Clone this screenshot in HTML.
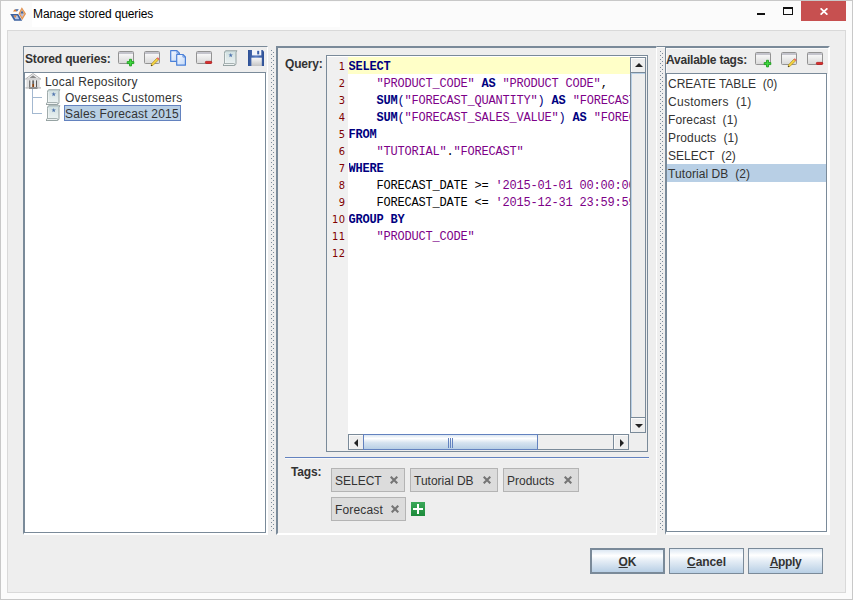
<!DOCTYPE html>
<html><head><meta charset="utf-8"><title>Manage stored queries</title>
<style>
html,body{margin:0;padding:0;}
body{width:853px;height:600px;overflow:hidden;background:#fbfbfb;font-family:"Liberation Sans",sans-serif;font-size:13px;color:#333;position:relative;}
.abs{position:absolute;}
#win{left:0;top:0;width:851px;height:598px;border:1px solid #c8c8c8;background:#fbfbfb;}
#titlebg{left:32px;top:2px;width:308px;height:25px;background:#fff;}
#title{left:33px;top:7px;letter-spacing:-0.12px;font-size:12px;color:#000;white-space:nowrap;}
#close{left:801px;top:1px;width:45px;height:20px;background:#c75050;}
#content{left:7px;top:30px;width:837px;height:561px;border:1px solid #d9d9d9;background:#eeeeee;}
.lbl{letter-spacing:-0.17px;font-weight:bold;font-size:12px;color:#333;white-space:nowrap;}
#lp{left:23px;top:46px;width:245px;height:489px;border-left:1px solid #7a8a99;border-top:1px solid #7a8a99;border-bottom:2px solid #fff;border-right:1px solid #fff;box-sizing:border-box;}
#tree{left:24px;top:72px;width:242px;height:461px;border:1px solid #7a8a99;background:#fff;box-sizing:border-box;box-shadow:1px 1px 0 #fff;}
#mp{left:276px;top:46px;width:381px;height:489px;border-left:2px solid #7a8a99;border-top:2px solid #7a8a99;border-right:1px solid #fff;border-bottom:2px solid #fff;box-sizing:border-box;}
#rp{left:665px;top:46px;width:165px;height:489px;border-left:1px solid #7a8a99;border-top:2px solid #7a8a99;border-right:2px solid #fff;border-bottom:2px solid #fff;box-sizing:border-box;box-shadow:inset 1px 1px 0 #fafafa;}
#list{left:666px;top:73px;width:161px;height:459px;border:1px solid #7a8a99;background:#fff;box-sizing:border-box;box-shadow:1px 1px 0 #fff;}
.li{left:667px;width:159px;height:18px;line-height:20px;overflow:hidden;font-size:12px;color:#333;white-space:pre;padding-left:1px;box-sizing:border-box;}
.tn{font-size:12px;letter-spacing:0.2px;color:#333;white-space:nowrap;line-height:16px;height:16px;}
#ed{left:326px;top:55px;width:322px;height:397px;border:1px solid #7a8a99;box-sizing:border-box;background:#fff;}
#gut{left:327px;top:56px;width:21px;height:395px;background:#f0f0f0;}
#hl{left:348px;top:57px;width:282px;height:17px;background:#ffffc8;}
.ln{left:325px;width:20.5px;letter-spacing:0.5px;text-align:right;font-family:"DejaVu Sans Condensed","DejaVu Sans",sans-serif;font-stretch:condensed;font-size:11px;color:#800000;height:17px;line-height:17px;}
.cl{left:348.5px;width:281.500px;overflow:hidden;white-space:pre;font-family:"Liberation Mono",monospace;font-size:12px;letter-spacing:-0.2px;height:17px;line-height:17px;color:#000;}
.k{color:#000080;font-weight:bold;}
.s{color:#7d0088;}
.p{color:#000080;}
.btn{top:548px;width:75px;height:26px;box-sizing:border-box;border:1px solid #7a8a99;background:linear-gradient(#dde8f3 0%,#ffffff 26%,#e6eef6 48%,#b8cfe5 100%);font-weight:bold;font-size:12px;text-align:center;line-height:26px;color:#333;letter-spacing:-0.1px;}
.btn u{text-decoration:underline;text-decoration-thickness:1px;text-underline-offset:1px;}
.chip{height:24px;box-sizing:border-box;border:1px solid #b4b4b4;background:#dcdcdc;font-size:12px;color:#333;line-height:24px;white-space:nowrap;overflow:hidden;}
.div{width:4px;background-image:radial-gradient(circle at 0.5px 0.5px,#9aa 0.6px,transparent 0.8px);}
</style></head><body>

<svg width="0" height="0" style="position:absolute">
<defs>
<linearGradient id="gbox" x1="0" y1="0" x2="0" y2="1"><stop offset="0" stop-color="#ffffff"/><stop offset="1" stop-color="#d8d8d8"/></linearGradient>
<linearGradient id="gscr" x1="0" y1="0" x2="0" y2="1"><stop offset="0" stop-color="#cfdfe0"/><stop offset="1" stop-color="#eff4f4"/></linearGradient>
<linearGradient id="gflop" x1="0" y1="0" x2="1" y2="0"><stop offset="0" stop-color="#2d4f94"/><stop offset="0.5" stop-color="#5b7fc4"/><stop offset="1" stop-color="#2d4f94"/></linearGradient>
<linearGradient id="gshut" x1="0" y1="0" x2="0" y2="1"><stop offset="0" stop-color="#fafafa"/><stop offset="1" stop-color="#c4c4c4"/></linearGradient>
<linearGradient id="gcopy" x1="0" y1="0" x2="1" y2="1"><stop offset="0" stop-color="#f4f8fe"/><stop offset="1" stop-color="#c4d9f7"/></linearGradient>
<g id="ibox">
<rect x="0.5" y="0.5" width="15" height="12" rx="1" fill="url(#gbox)" stroke="#939393"/>
<rect x="1" y="1" width="14" height="2" fill="#c4c4cc"/>
</g>
<g id="iadd"><use href="#ibox"/>
<path d="M11.500 8.300h2v2.300h2.300v2h-2.300v2.300h-2v-2.300h-2.300v-2h2.300z" fill="#3fd83f" stroke="#1fa01f" stroke-width="0.9" stroke-linejoin="round"/>
</g>
<g id="iedit"><use href="#ibox"/>
<path d="M12.800 7.200l1.700 1.700l-5.400 5.400l-2 0.600l0.400-2.100z" fill="#f5d442" stroke="#a08018" stroke-width="0.6"/>
<path d="M12.800 7.200l0.900-0.900l1.800 1.800l-0.900 0.900z" fill="#f05a5a"/>
<path d="M7 15l0.300-1.300l1 0.900z" fill="#111"/>
</g>
<g id="idel"><use href="#ibox"/>
<rect x="9.400" y="10.400" width="6.300" height="2" rx="0.700" fill="#e03030" stroke="#b01818" stroke-width="0.8"/>
</g>
<g id="iscr">
<path d="M2.500 0.800h11.600c-1 0.700-1.100 1.500-1.100 2.500v10c0 1.200-0.600 1.900-1.600 2.200h-11.400c1.200-0.400 1.500-1.100 1.500-2.200v-10c0-1 0.300-1.900 1-2.500z" fill="url(#gscr)" stroke="#8a9898" stroke-width="0.900"/>
<path d="M2.300 3v10" stroke="#fff" stroke-width="0.700" opacity="0.800"/>
<rect x="0.500" y="13.600" width="11.300" height="1.900" rx="0.950" fill="#f6f9f9" stroke="#8a9898" stroke-width="0.800"/>
<path d="M7.70 2.90L8.26 4.53L9.98 4.56L8.60 5.59L9.11 7.24L7.70 6.25L6.29 7.24L6.80 5.59L5.42 4.56L7.14 4.53z" fill="#4f74ad"/>
</g>
<g id="icopy">
<path d="M0.700 0.700h6.200l2.500 2.500v8.200h-8.700z" fill="url(#gcopy)" stroke="#4a80d8" stroke-width="1.200" stroke-linejoin="round"/>
<path d="M6.700 4.500h6.200l2.500 2.500v8.200h-8.700z" fill="url(#gcopy)" stroke="#4a80d8" stroke-width="1.200" stroke-linejoin="round"/>
<path d="M12.900 4.700v2.400h2.400" fill="none" stroke="#4a80d8" stroke-width="0.700"/>
<path d="M6.900 0.900v2.400h2.400" fill="none" stroke="#4a80d8" stroke-width="0.700"/>
</g>
<g id="isave">
<path d="M0 0h14.500l1.500 1.500v14.500h-16z" fill="url(#gflop)"/>
<rect x="4" y="0" width="9.300" height="5.400" fill="#f4f6fa"/>
<rect x="9.200" y="0.800" width="2" height="3.600" fill="#3a5fa8"/>
<rect x="3.400" y="7.700" width="10.400" height="8.300" fill="url(#gshut)"/>
</g>
</defs></svg>
<div id="win" class="abs"></div>
<div id="titlebg" class="abs"></div>
<div id="title" class="abs">Manage stored queries</div>
<div id="close" class="abs"></div>

<svg class="abs" style="left:9px;top:6px" width="18" height="16">
<path d="M1.200 8H9.200L13.200 14.800H5.200z" fill="#3c62a0"/>
<path d="M4.300 9.600H8.300L10.300 13.200H6.300z" fill="#b8c8e8"/>
<path d="M4.600 9.600H7.600L6.100 12z" fill="#e08030"/>
<path d="M12.800 1.200L17 7.800L13.200 14L9.600 7.600z" fill="#e09050"/>
<path d="M12.900 3.200L15.600 7.700L13.200 11.800L11 7.600z" fill="#f0c090"/>
<path d="M13 4.600L14.800 7.600H11.400z" fill="#3c62a0"/>
<path d="M11.500 8H14.700L13.200 10.800z" fill="#a8b8e8"/>
<path d="M4 5.600L6 3L8 5.600z" fill="#e08030"/>
<path d="M6 3.200H9.800L8 5.600z" fill="#3c62a0"/>
</svg>
<div class="abs" style="left:757px;top:13px;width:8px;height:2px;background:#111;"></div>
<div class="abs" style="left:783px;top:7px;width:10px;height:8px;box-sizing:border-box;border:1px solid #111;border-top-width:2px;"></div>
<svg class="abs" style="left:820px;top:8px" width="8" height="7"><path d="M0.600 0.300L7.400 6.700M7.400 0.300L0.600 6.700" stroke="#fff" stroke-width="1.700"/></svg>
<div id="content" class="abs"></div>

<div id="lp" class="abs"></div>
<div class="abs lbl" style="left:25px;top:52px;">Stored queries:</div>
<div id="tree" class="abs"></div>

<svg class="abs" style="left:25px;top:73px" width="17" height="16">
<path d="M0.500 6L8 0.500L15.800 6z" fill="#f2f2f2" stroke="#b4b4b4" stroke-width="1"/>
<path d="M4.300 5L8 2.200L11.600 5z" fill="#8a8a8a"/>
<rect x="1.500" y="6" width="13.500" height="1" fill="#d4d4d4"/>
<rect x="1.500" y="7" width="2.300" height="7" fill="#dcdcdc"/>
<rect x="12.400" y="7" width="2.300" height="7" fill="#dcdcdc"/>
<rect x="4.200" y="7.300" width="1.300" height="6.700" fill="#5a5a5a"/>
<rect x="10.800" y="7.300" width="1.300" height="6.700" fill="#5a5a5a"/>
<rect x="5.700" y="7" width="1.300" height="7" fill="#ececec"/>
<rect x="9.300" y="7" width="1.300" height="7" fill="#ececec"/>
<rect x="7.200" y="7.300" width="1.900" height="3.700" fill="#6a6a6a"/>
<rect x="7.200" y="11" width="1.900" height="3" fill="#8a4513"/>
<rect x="0.500" y="14" width="15.500" height="1.700" fill="#c8c8c8"/>
<rect x="4" y="14.300" width="8.500" height="1.500" fill="#7a7a7a"/>
</svg>
<div class="abs" style="left:32px;top:89px;width:1px;height:25px;background:#a3b8d0;"></div>
<div class="abs" style="left:32px;top:97px;width:10px;height:1px;background:#a3b8d0;"></div>
<div class="abs" style="left:32px;top:113px;width:10px;height:1px;background:#a3b8d0;"></div>
<div class="abs tn" style="left:45px;top:74px;">Local Repository</div>
<div class="abs tn" style="left:65px;top:90px;letter-spacing:0.27px;">Overseas Customers</div>
<div class="abs" style="left:64px;top:105px;width:117px;height:16px;background:#b8cfe5;border:1px solid #6382bf;box-sizing:border-box;"></div>
<div class="abs tn" style="left:65px;top:106px;">Sales Forecast 2015</div>


<svg class="abs" style="left:118px;top:51px" width="18" height="17"><use href="#iadd"/></svg>
<svg class="abs" style="left:144px;top:51px" width="18" height="17"><use href="#iedit"/></svg>
<svg class="abs" style="left:170px;top:50px" width="17" height="17"><use href="#icopy"/></svg>
<svg class="abs" style="left:196px;top:51px" width="18" height="17"><use href="#idel"/></svg>
<svg class="abs" style="left:223px;top:50px" width="16" height="17"><use href="#iscr"/></svg>
<svg class="abs" style="left:248px;top:50px" width="16" height="16"><use href="#isave"/></svg>

<svg class="abs" style="left:755px;top:52px" width="18" height="17"><use href="#iadd"/></svg>
<svg class="abs" style="left:781px;top:52px" width="18" height="17"><use href="#iedit"/></svg>
<svg class="abs" style="left:807px;top:52px" width="18" height="17"><use href="#idel"/></svg>

<svg class="abs" style="left:46px;top:89px" width="16" height="17"><use href="#iscr"/></svg>
<svg class="abs" style="left:46px;top:105px" width="16" height="17"><use href="#iscr"/></svg>
<div id="mp" class="abs"></div>
<div class="abs lbl" style="left:285px;top:57px;">Query:</div>
<div id="ed" class="abs"></div>
<div id="gut" class="abs"></div>
<div id="hl" class="abs"></div>
<div id="lines">
<div class="abs ln" style="top:58px;">1</div><div class="abs cl" style="top:59px;"><span class="k">SELECT</span></div>
<div class="abs ln" style="top:75px;">2</div><div class="abs cl" style="top:76px;">    <span class="s">"PRODUCT_CODE"</span> <span class="k">AS</span> <span class="s">"PRODUCT CODE"</span>,</div>
<div class="abs ln" style="top:92px;">3</div><div class="abs cl" style="top:93px;">    <span class="k">SUM</span><span class="p">(</span><span class="s">"FORECAST_QUANTITY"</span><span class="p">)</span> <span class="k">AS</span> <span class="s">"FORECAST QUANTITY"</span>,</div>
<div class="abs ln" style="top:109px;">4</div><div class="abs cl" style="top:110px;">    <span class="k">SUM</span><span class="p">(</span><span class="s">"FORECAST_SALES_VALUE"</span><span class="p">)</span> <span class="k">AS</span> <span class="s">"FORECAST SALES VALUE"</span></div>
<div class="abs ln" style="top:126px;">5</div><div class="abs cl" style="top:127px;"><span class="k">FROM</span></div>
<div class="abs ln" style="top:143px;">6</div><div class="abs cl" style="top:144px;">    <span class="s">"TUTORIAL"</span>.<span class="s">"FORECAST"</span></div>
<div class="abs ln" style="top:160px;">7</div><div class="abs cl" style="top:161px;"><span class="k">WHERE</span></div>
<div class="abs ln" style="top:177px;">8</div><div class="abs cl" style="top:178px;">    FORECAST_DATE &gt;= <span class="s">'2015-01-01 00:00:00'</span> <span class="k">AND</span></div>
<div class="abs ln" style="top:194px;">9</div><div class="abs cl" style="top:195px;">    FORECAST_DATE &lt;= <span class="s">'2015-12-31 23:59:59'</span></div>
<div class="abs ln" style="top:211px;">10</div><div class="abs cl" style="top:212px;"><span class="k">GROUP BY</span></div>
<div class="abs ln" style="top:228px;">11</div><div class="abs cl" style="top:229px;">    <span class="s">"PRODUCT_CODE"</span></div>
<div class="abs ln" style="top:245px;">12</div><div class="abs cl" style="top:246px;"></div>
</div>

<div class="abs lbl" style="left:291px;top:465px;">Tags:</div>


<!-- vertical scrollbar -->
<div class="abs" style="left:327px;top:56px;width:320px;height:1px;background:#fff;"></div>
<div class="abs" style="left:630px;top:57px;width:17px;height:394px;background:#eeeeee;"></div>
<div class="abs" style="left:630px;top:57px;width:16px;height:376px;box-sizing:border-box;border:1px solid #7a8a99;"></div>
<div class="abs" style="left:631px;top:73px;width:1px;height:344px;background:#b8cfe5;"></div>
<div class="abs" style="left:631px;top:73px;width:14px;height:1px;background:#b8cfe5;"></div>
<div class="abs" style="left:630px;top:57px;width:16px;height:16px;box-sizing:border-box;border:1px solid #7a8a99;background:#eeeeee;box-shadow:inset 1px 1px 0 #fafafa;"></div>
<div class="abs" style="left:630px;top:417px;width:16px;height:16px;box-sizing:border-box;border:1px solid #7a8a99;background:#eeeeee;box-shadow:inset 1px 1px 0 #fafafa;"></div>
<svg class="abs" style="left:635px;top:63px" width="8" height="4"><path d="M0 4L4 0L8 4z" fill="#222"/></svg>
<svg class="abs" style="left:635px;top:424px" width="8" height="4"><path d="M0 0L4 4L8 0z" fill="#222"/></svg>
<!-- horizontal scrollbar -->
<div class="abs" style="left:348px;top:434px;width:282px;height:17px;background:#eeeeee;"></div>
<div class="abs" style="left:348px;top:434px;width:281px;height:16px;box-sizing:border-box;border:1px solid #7a8a99;"></div>
<div class="abs" style="left:348px;top:434px;width:16px;height:16px;box-sizing:border-box;border:1px solid #7a8a99;background:#eeeeee;box-shadow:inset 1px 1px 0 #fafafa;"></div>
<div class="abs" style="left:613px;top:434px;width:16px;height:16px;box-sizing:border-box;border:1px solid #7a8a99;background:#eeeeee;box-shadow:inset 1px 1px 0 #fafafa;"></div>
<svg class="abs" style="left:354px;top:439px" width="4" height="8"><path d="M4 0L0 4L4 8z" fill="#222"/></svg>
<svg class="abs" style="left:620px;top:439px" width="4" height="8"><path d="M0 0L4 4L0 8z" fill="#222"/></svg>
<div class="abs" style="left:363px;top:434px;width:175px;height:16px;box-sizing:border-box;border:1px solid #6382bf;background:linear-gradient(#dbe6f2 0%,#ffffff 25%,#d6e3f0 55%,#b8cfe5 100%);"></div>
<div class="abs" style="left:448px;top:438px;width:1px;height:10px;background:#6382bf;box-shadow:2px 0 0 #6382bf,4px 0 0 #6382bf;"></div>
<!-- separator -->
<div class="abs" style="left:285px;top:457px;width:364px;height:1px;background:#6382bf;"></div>
<div class="abs" style="left:285px;top:458px;width:364px;height:1px;background:#f8f8f8;"></div>
<!-- chips -->
<div class="abs chip" style="left:331px;top:468px;width:74px;padding-left:3px;">SELECT</div>
<div class="abs chip" style="left:410px;top:468px;width:88px;padding-left:3px;">Tutorial DB</div>
<div class="abs chip" style="left:503px;top:468px;width:76px;padding-left:3px;">Products</div>
<div class="abs chip" style="left:331px;top:497px;width:75px;padding-left:3px;letter-spacing:0.17px;">Forecast</div>
<svg class="abs" style="left:390px;top:476px" width="8" height="8"><path d="M0.700 0.700L7.300 7.300M7.300 0.700L0.700 7.300" stroke="#757575" stroke-width="2.100"/></svg>
<svg class="abs" style="left:483px;top:476px" width="8" height="8"><path d="M0.700 0.700L7.300 7.300M7.300 0.700L0.700 7.300" stroke="#757575" stroke-width="2.100"/></svg>
<svg class="abs" style="left:564px;top:476px" width="8" height="8"><path d="M0.700 0.700L7.300 7.300M7.300 0.700L0.700 7.300" stroke="#757575" stroke-width="2.100"/></svg>
<svg class="abs" style="left:391px;top:505px" width="8" height="8"><path d="M0.700 0.700L7.300 7.300M7.300 0.700L0.700 7.300" stroke="#757575" stroke-width="2.100"/></svg>
<svg class="abs" style="left:411px;top:502px" width="14" height="14"><defs><linearGradient id="gpl" x1="0" y1="0" x2="0" y2="1"><stop offset="0" stop-color="#3aa858"/><stop offset="1" stop-color="#1c8a3a"/></linearGradient></defs><rect width="14" height="14" fill="url(#gpl)"/><path d="M7 2v10M2 7h10" stroke="#fff" stroke-width="2"/></svg>

<div class="abs" style="left:657px;top:46px;width:8px;height:1px;background:#7a8a99;"></div>
<div class="abs" style="left:657px;top:47px;width:8px;height:1px;background:#fafafa;"></div>
<svg class="abs" style="left:268px;top:48px" width="8" height="486"><defs><pattern id="dp1" x="0" y="2" width="8" height="4" patternUnits="userSpaceOnUse"><rect x="3" y="0" width="1" height="1" fill="#7a8a99"/><rect x="5" y="2" width="1" height="1" fill="#7a8a99"/></pattern></defs><rect x="0" y="2" width="8" height="482" fill="url(#dp1)"/></svg>
<svg class="abs" style="left:657px;top:48px" width="8" height="486"><defs><pattern id="dp2" x="0" y="3" width="8" height="4" patternUnits="userSpaceOnUse"><rect x="3" y="0" width="1" height="1" fill="#7a8a99"/><rect x="5" y="2" width="1" height="1" fill="#7a8a99"/></pattern></defs><rect x="0" y="3" width="8" height="479" fill="url(#dp2)"/></svg>
<div id="rp" class="abs"></div>
<div class="abs lbl" style="left:666px;top:53px;letter-spacing:-0.22px;">Available tags:</div>
<div id="list" class="abs"></div>
<div class="abs li" style="top:74px;">CREATE TABLE  (0)</div>
<div class="abs li" style="top:92px;letter-spacing:0.3px;">Customers  (1)</div>
<div class="abs li" style="top:110px;letter-spacing:0.12px;">Forecast  (1)</div>
<div class="abs li" style="top:128px;letter-spacing:0.14px;">Products  (1)</div>
<div class="abs li" style="top:146px;">SELECT  (2)</div>
<div class="abs li" style="top:164px;background:#b8cfe5;letter-spacing:0.08px;">Tutorial DB  (2)</div>

<div class="abs btn" style="left:590px;border-width:2px;line-height:24px;"><u>O</u>K</div>
<div class="abs btn" style="left:669px;"><u>C</u>ancel</div>
<div class="abs btn" style="left:748px;letter-spacing:-0.35px;"><u>A</u>pply</div>
</body></html>
